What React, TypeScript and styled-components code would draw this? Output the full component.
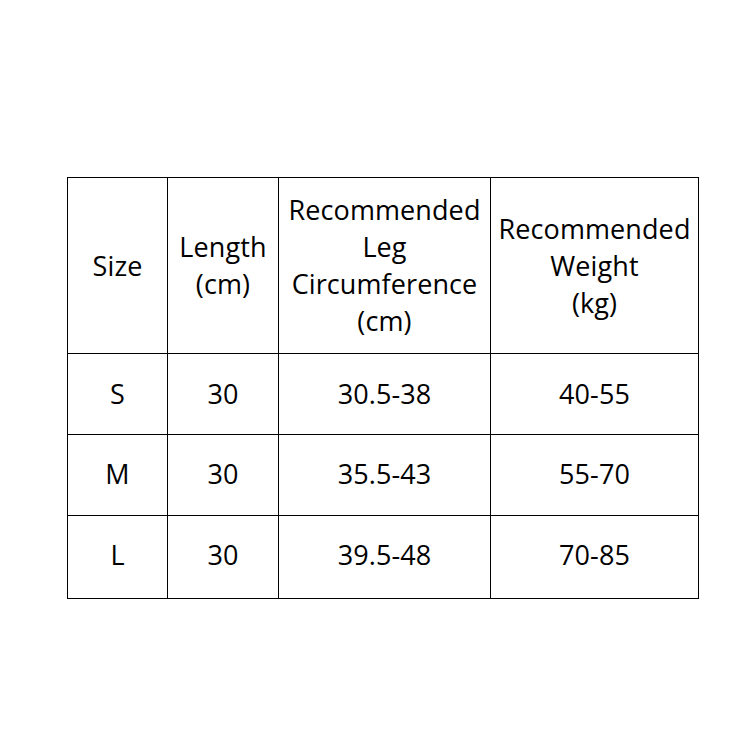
import styled, { createGlobalStyle } from 'styled-components';

const GlobalStyle = createGlobalStyle`
  html, body {
    margin: 0;
    padding: 0;
    background: #fff;
  }
`;

const Page = styled.div`
  width: 750px;
  height: 750px;
  padding: 177px 0 0 67px;
  box-sizing: border-box;
  background: #fff;
`;

const Table = styled.table`
  border-collapse: collapse;
  table-layout: fixed;
  width: 631px;
  font-family: 'Open Sans', 'Noto Sans', sans-serif;
  font-size: 27px;
  color: #000;
`;

const Cell = styled.td<{ $h?: number; $lift?: number }>`
  border: 1px solid #000;
  text-align: center;
  vertical-align: middle;
  padding: 0 0 ${p => p.$lift ?? 0}px;
  line-height: 37px;
  height: ${p => (p.$h ?? 80) - (p.$lift ?? 0)}px;
  letter-spacing: 0.1px;
`;

const widths = [100, 111, 212, 208];

const headers = [
  'Size',
  'Length\n(cm)',
  'Recommended\nLeg\nCircumference\n(cm)',
  'Recommended\nWeight\n(kg)',
];

const rows = [
  ['S', '30', '30.5-38', '40-55'],
  ['M', '30', '35.5-43', '55-70'],
  ['L', '30', '39.5-48', '70-85'],
];

const Lines = ({ text }: { text: string }) => (
  <>
    {text.split('\n').map((t, i) => (
      <div key={i}>{t}</div>
    ))}
  </>
);

export default function App() {
  return (
    <Page>
      <GlobalStyle />
      <Table>
        <colgroup>
          {widths.map((w, i) => (
            <col key={i} style={{ width: w }} />
          ))}
        </colgroup>
        <tbody>
          <tr>
            {headers.map((h, i) => (
              <Cell key={i} $h={175} $lift={1}>
                <Lines text={h} />
              </Cell>
            ))}
          </tr>
          {rows.map((r, ri) => (
            <tr key={ri}>
              {r.map((c, ci) => (
                <Cell key={ci} $h={ri === 2 ? 82 : 80} $lift={ri === 0 ? 2 : ri === 1 ? 4 : 5}>
                  {c}
                </Cell>
              ))}
            </tr>
          ))}
        </tbody>
      </Table>
    </Page>
  );
}
